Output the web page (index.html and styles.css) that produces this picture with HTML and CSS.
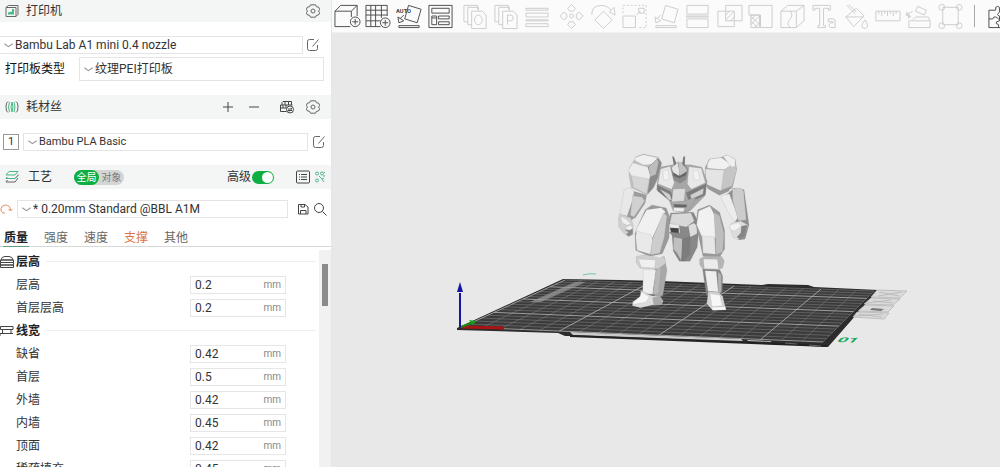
FILE: index.html
```html
<!DOCTYPE html>
<html lang="zh-CN">
<head>
    <meta charset="UTF-8">
    <meta name="viewport" content="width=device-width, initial-scale=1.0">
    <title>Bambu Studio</title>
    <link rel="stylesheet" href="styles.css">
</head>
<body>
    <!-- Shared icons -->
    <svg class="icon-defs" aria-hidden="true">
        <symbol id="i-gear" viewBox="0 0 14 14">
            <path d="M4.500 .8h5l1 2 2 .2 1.200 2.300L12.500 7l1.200 1.700-1.200 2.300-2 .2-1 2h-5l-1-2-2-.2L.3 8.700 1.500 7 .3 5.300 1.500 3l2-.2z"/>
            <circle cx="7" cy="7" r="2"/>
        </symbol>
        <symbol id="i-edit" viewBox="0 0 14 14">
            <path d="M8 1.500H3.500Q1.500 1.500 1.500 3.500v7q0 2 2 2h6q2 0 2-2V7M6.500 8.500l6-7"/>
        </symbol>
        <symbol id="i-down" viewBox="0 0 8 8">
            <path d="M.3 2.500 4 5 7.700 2.500"/>
        </symbol>
    </svg>

    <div class="app">
        <aside class="sidebar">
            <div class="section-head">
                <svg class="icon" viewBox="0 0 14 14"><path d="M1 3.500 3.500 1.500h9.500v9L11 12.500H1zM11 12.500v-9"/><path class="green" d="M3 10.500V8.500l4-1V5h2v5.500z"/><path d="M1 3.500h10"/></svg>
                <h2>打印机</h2>
                <button class="icon-button" aria-label="打印机设置"><svg class="icon"><use href="#i-gear"/></svg></button>
            </div>

            <div class="printer">
                <div class="row printer-row">
                    <div class="select-box">
                        <svg class="chevron"><use href="#i-down"/></svg>
                        <select aria-label="打印机"><option>Bambu Lab A1 mini 0.4 nozzle</option></select>
                    </div>
                    <button class="icon-button" aria-label="编辑打印机"><svg class="icon"><use href="#i-edit"/></svg></button>
                </div>
                <div class="row plate-row">
                    <label for="plate">打印板类型</label>
                    <div class="select-box tall">
                        <svg class="chevron"><use href="#i-down"/></svg>
                        <select id="plate"><option>纹理PEI打印板</option></select>
                    </div>
                </div>
            </div>

            <div class="section-head">
                <svg class="icon" viewBox="0 0 14 14"><path d="M3 1.500Q1 2 1 7t2 5.500M11 1.500Q13 2 13 7t-2 5.500"/><path class="green-line" d="M4.500 2q-2 5 0 10M7 2q-2 5 0 10M9 2q2 5 0 10M7 2q2 5 0 10"/></svg>
                <h2>耗材丝</h2>
                <button class="icon-button" aria-label="添加"><svg class="icon dark" viewBox="0 0 14 14"><path d="M7 2v10M2 7h10"/></svg></button>
                <button class="icon-button" aria-label="删除"><svg class="icon dark" viewBox="0 0 14 14"><path d="M2 7h10"/></svg></button>
                <button class="icon-button ams" aria-label="同步"><svg class="icon dark" viewBox="0 0 14 14"><path d="M2 5V2.500L3 1.500h8.500V5M5 1.500V5M8.500 1.500V5M.5 5h12M.5 5v6.500h6M3 5v3M6 5v3M.5 8h6"/><circle cx="10" cy="9.500" r="3.500"/><path d="M8 9h4l-1-1M12 10.500H8l1 1"/></svg></button>
                <button class="icon-button" aria-label="耗材设置"><svg class="icon"><use href="#i-gear"/></svg></button>
            </div>

            <div class="row filament-row">
                <button class="slot">1</button>
                <div class="select-box">
                    <svg class="chevron"><use href="#i-down"/></svg>
                    <select aria-label="耗材"><option>Bambu PLA Basic</option></select>
                </div>
                <button class="icon-button" aria-label="编辑耗材"><svg class="icon"><use href="#i-edit"/></svg></button>
            </div>

            <div class="section-head process-head">
                <svg class="icon" viewBox="0 0 14 14"><path d="M1 8.500 2.500 7M13 4.500v1l-3 3H1M13 8l-3 4H1l1.500-2"/><path class="green-line" d="M1 5 4 1.500h9L10 5zM13 5l-3 3.500H1"/></svg>
                <h2>工艺</h2>
                <div class="scope">
                    <button class="active">全局</button>
                    <button>对象</button>
                </div>
                <label class="advanced">高级<input type="checkbox" class="toggle" checked></label>
                <button class="icon-button" aria-label="参数列表"><svg class="icon dark" viewBox="0 0 14 14"><rect x=".5" y="1" width="13" height="12" rx="1"/><path d="M5 4.500h6M5 7h6M5 9.500h6M3 4.500h1M3 7h1M3 9.500h1"/></svg></button>
                <button class="icon-button compare" aria-label="比较"><svg class="icon" viewBox="0 0 12 14"><g class="green-line"><circle cx="3" cy="3.500" r="1.500"/><circle cx="8" cy="3.500" r="1.500"/><circle cx="3" cy="10.500" r="1.500"/><path d="m5 6 3 3 2 3M8 9l2-1M10 3l1-1M9 6h2"/></g></svg></button>
            </div>

            <div class="row preset-row">
                <button class="icon-button" aria-label="重置"><svg class="icon" viewBox="0 0 14 14"><path class="orange-line" d="M3 11Q.5 9.500 1 6.500T5.500 3Q10 3 10.500 8M8.500 7l2 2 2-2M5 11H3"/></svg></button>
                <div class="select-box">
                    <svg class="chevron"><use href="#i-down"/></svg>
                    <select aria-label="工艺预设"><option>* 0.20mm Standard @BBL A1M</option></select>
                </div>
                <button class="icon-button" aria-label="保存"><svg class="icon dark" viewBox="0 0 14 14"><path d="M2.500 2.500H9L12 5v7H2.500zM5 2.500V5h3.500V2.500M4.500 12V8.500H10V12"/></svg></button>
                <button class="icon-button" aria-label="搜索"><svg class="icon dark" viewBox="0 0 14 14"><circle cx="6" cy="6" r="4.500"/><path d="m9.500 9.500 4 4"/></svg></button>
            </div>

            <nav class="tabs">
                <button class="active">质量</button>
                <button>强度</button>
                <button>速度</button>
                <button class="changed">支撑</button>
                <button>其他</button>
            </nav>

            <div class="settings">
                <div class="settings-list">
                    <div class="group-head">
                        <svg class="icon dark" viewBox="0 0 14 14"><path d="M1 5Q1.500 1.500 5 1.500h4q3.500 0 4 3.500zM.5 5h13v2.500H.5zM.5 7.500h13V10H.5zM.5 10h13v2.500H.5z"/></svg>
                        <h3>层高</h3>
                    </div>
                    <div class="field">
                        <label for="layer">层高</label>
                        <div class="value"><input id="layer" type="text" value="0.2"><span>mm</span></div>
                    </div>
                    <div class="field">
                        <label for="first-layer">首层层高</label>
                        <div class="value"><input id="first-layer" type="text" value="0.2"><span>mm</span></div>
                    </div>
                    <div class="group-head">
                        <svg class="icon dark" viewBox="0 0 14 14"><path d="M.5 2.500h12.500v3H.5zM2.500 5.500v4M11 5.500v4M0 9.500h13M0 12V9.500"/></svg>
                        <h3>线宽</h3>
                    </div>
                    <div class="field">
                        <label for="w-default">缺省</label>
                        <div class="value"><input id="w-default" type="text" value="0.42"><span>mm</span></div>
                    </div>
                    <div class="field">
                        <label for="w-first">首层</label>
                        <div class="value"><input id="w-first" type="text" value="0.5"><span>mm</span></div>
                    </div>
                    <div class="field">
                        <label for="w-outer">外墙</label>
                        <div class="value"><input id="w-outer" type="text" value="0.42"><span>mm</span></div>
                    </div>
                    <div class="field">
                        <label for="w-inner">内墙</label>
                        <div class="value"><input id="w-inner" type="text" value="0.45"><span>mm</span></div>
                    </div>
                    <div class="field">
                        <label for="w-top">顶面</label>
                        <div class="value"><input id="w-top" type="text" value="0.42"><span>mm</span></div>
                    </div>
                    <div class="field">
                        <label for="w-infill">稀疏填充</label>
                        <div class="value"><input id="w-infill" type="text" value="0.45"><span>mm</span></div>
                    </div>
                </div>
                <div class="scrollbar"><div class="thumb"></div></div>
            </div>
        </aside>

        <main class="workspace">
            <div class="toolbar">
                <div class="tools">
                    <button aria-label="添加模型"><svg viewBox="0 0 28 28"><path d="M17 25H1V9h17v6M1 9l6-6h17v11M18 9l6-6"/><circle cx="22" cy="20" r="5"/><path d="M22 17v6M19 20h6"/></svg></button>
                    <button aria-label="添加盘"><svg viewBox="0 0 28 28"><path d="M16 25H1V3h22v11M1 8h22M1 13h22M1 19h15M6 3v22M11 3v22M17 3v13"/><circle cx="21" cy="21" r="5"/><path d="M21 18v6M18 21h6"/></svg></button>
                    <button aria-label="自动朝向"><svg viewBox="0 0 28 28"><path d="m13 3 13 4-4 14-13-4zM3 24h21v2H3zM8 13l-4 4M2 15l1 6 5-2z"/><text x="0" y="11">AUTO</text></svg></button>
                    <button aria-label="全部整理"><svg viewBox="0 0 28 28"><path d="M2 3h24v23H2zM5 6h18v5H5zM5 14h5v9H5zM12 14h11v3H12zM12 20h11v3H12zM5 16h5"/></svg></button>
                </div>
                <div class="tools disabled">
                    <button aria-label="拆分为对象"><svg viewBox="0 0 28 28"><path d="M6 20H2V3h14v4M10 23H6V5h11v4M10 9h11l4 4v14H10z"/><ellipse cx="17" cy="18" rx="4" ry="5"/></svg></button>
                    <button aria-label="拆分为零件"><svg viewBox="0 0 28 28"><path d="M6 20H2V3h14v4M10 23H6V5h11v4M10 9h11l4 4v14H10zM15 23V13h3q3 0 3 3t-3 3h-3"/></svg></button>
                    <button aria-label="可变层高"><svg viewBox="0 0 28 28"><path d="M2 6h23v2H2zM2 11h23v4H2zM2 18h23v1H2zM2 22h23v3H2z"/></svg></button>
                </div>
                <div class="tools disabled edit-tools">
                    <button aria-label="移动"><svg viewBox="0 0 28 28"><path d="m14 2-4 4 2 3h4l2-3zM14 27l-4-4 2-3h4l2 3zM2 14l4-4 3 2v4l-3 2zM26 14l-4-4-3 2v4l3 2z"/><circle cx="14" cy="14" r="2"/></svg></button>
                    <button aria-label="旋转"><svg viewBox="0 0 28 28"><path d="m14 9 9 9-9 9-9-9zM2 13Q1 4 11 3q7 0 11 5M20 10l5-5 1 8z"/></svg></button>
                    <button aria-label="缩放"><svg viewBox="0 0 28 28"><path d="M2 14h13v12H2zM16 13l4-4M18 6h6v5h-5z"/><path class="dash" d="M2 11V3h24v23h-9"/></svg></button>
                    <button aria-label="选择底面"><svg viewBox="0 0 28 28"><path d="m13 3 13 4-4 14-13-4zM3 24h21v2H3zM8 13l-4 4M2 15l1 6 5-2z"/></svg></button>
                    <button aria-label="切割"><svg viewBox="0 0 28 28"><path d="M3 3h22v9H3zM3 17h22v9H3zM2 14h24M2 15h24"/></svg></button>
                    <button aria-label="布尔运算"><svg viewBox="0 0 28 28"><path d="M2 9h17v16H2zM10 3h17v16H10zM10 13l4-4M10 18l9-9M15 19l4-4"/></svg></button>
                    <button aria-label="支撑绘制"><svg viewBox="0 0 28 28"><path d="M2 3h24v23H14V13H2zM4 13h9v13H4zM4 18l5-5M4 23l9-9M8 26l5-5M4 14l9 9M4 19l7 7"/></svg></button>
                    <button aria-label="涂缝"><svg viewBox="0 0 28 28"><path d="M2 9h16v17H2zM2 9l7-6h17v16l-8 7M18 9l8-6M12 26q-5-4-1-8t1-9"/></svg></button>
                    <button aria-label="文字"><svg viewBox="0 0 28 28"><path d="M2 3h18v5h-2V6h-5v18h2v2H7v-2h2V6H4v2H2zM18 17h5q2 0 2 2v7h-5q-3-3 1-5h2v-1h-5z"/></svg></button>
                    <button aria-label="颜色绘制"><svg viewBox="0 0 28 28"><path d="m4 15 11-9 8 8-11 11zM5 3l9 9M4 15h18M7 2l8 8M24 18q-7 8 0 9 5-1 0-9z"/></svg></button>
                    <button aria-label="测量"><svg viewBox="0 0 28 28"><path d="M2 9h25v10H2zM5 9v3M8 9v5M11 9v3M14 9v5M17 9v3M20 9v5M23 9v3"/></svg></button>
                    <button aria-label="装配"><svg viewBox="0 0 28 28"><path d="M4 19h22v7H4zM8 18l3-3h13l2 4M13 4l9 4-2 5-9-4zM8 9l-5 3 1 5M2 10l4 5-5-2z"/></svg></button>
                    <button aria-label="组装"><svg viewBox="0 0 28 28"><path d="M6 5h16v18H6z"/><circle cx="5" cy="5" r="3"/><circle cx="23" cy="5" r="3"/><circle cx="5" cy="24" r="3"/><circle cx="23" cy="24" r="3"/></svg></button>
                </div>
                <div class="divider"></div>
                <div class="tools last">
                    <button aria-label="装配视图"><svg viewBox="0 0 28 28"><path d="M2 8h7q-1-4 2-4t2 4h12v18H2zM2 17h4q1-3 3-2t3 2h3M12 26v-3q-4-1-2-3l3-1v-5q-4-1 0-4V8"/></svg></button>
                </div>
            </div>

            <svg class="scene" viewBox="332 33 668 434" role="img" aria-label="3D 视图">
                <!-- build plate -->
                <path fill="#2c2c2c" d="M457 328 563 279 620 280 660 281 762 285 768 284 808 285 814 287 878 290 828 347 775 344 574 336 565 336 558 333 457 330z"/>
                <path fill="#3b3b3b" d="M462 327 565 280 874 291 823 342z"/>
                <path class="grid" id="grid"/>
                <path class="grid strong" id="gridStrong"/>
                <path fill="#999" d="m575 282 11 0-45 20-11 0z" opacity=".7"/>
                <path fill="#c9cac9" d="m570 332 171 7 2 2-170-6zM747 340l23 1 2 1-24-1z"/>
                <path stroke="#222" stroke-width="2" d="m570 336 257 10"/>
                <path stroke="#666" d="m785 343 12 1M809 345l12 1"/>
                <path stroke="#6cc7a0" fill="none" d="M583 275q6-2 13-1"/>
                <!-- plate buttons -->
                <g fill="#dadada" stroke="#b0b0b0" stroke-width=".7">
                    <path d="m877 290 30 1-7 7-29-1zM871 298l29 1-7 6-29-1zM865 305l29 1-6 6-30-1zM857 312l32 1-5 6-31-2z"/>
                    <path fill="none" d="m879 292 20 4M902 292l-24 4M873 301l20 2M866 303l25-3M858 314l24 3M855 316l28-2"/>
                </g>
                <path fill="#777" d="m872 308 12 1-3 2-11-1z"/>
                <text class="plate-number" transform="matrix(1.6 .05 -.6 .6 836 342)">01</text>
                <!-- axes -->
                <path stroke="#a81414" stroke-width="3" d="m462 327 42 1"/>
                <path stroke="#168c16" stroke-width="2" d="m461 327 13-5"/>
                <path fill="#17a317" d="m469 320 7 1-3 4z"/>
                <path stroke="#1515a3" stroke-width="2" d="M460 327V293"/>
                <path fill="#1515a3" d="m460 282 3 10h-6z"/>

                <!-- robot model -->
                <g class="robot" transform="translate(610 145) scale(.3333)">
                    <!-- arms -->
                    <path fill="#9c9c9c" d="m60 136 50 14-5 25-28 42-13 8-32-12 10-52z"/>
                    <path fill="#e8e8e8" d="m42 134 18-6 12 12-4 26-17 48-22-6 9-48z"/>
                    <path fill="#d0d0d0" d="m68 152 28 4 8 12-32 48-11-5z"/>
                    <path fill="#d0d0d0" d="m28 206 34 12 8 22-2 28-12 7-13-8-16-20-2-24z"/>
                    <path fill="#f0f0f0" d="m31 213 17 9 15 14-12 5-14-8zM45 248l16-8 8 10-10 8z"/>
                    <path fill="#8b8b8b" d="m45 254 13 2 10-5v17l-12 6-7-6 7-6z"/>
                    <path fill="#8f8f8f" d="m372 130 30 4 15 106-12 42-18 3-14-18 10-24-26-50-14-38z"/>
                    <path fill="#ececec" d="m331 154 27-8 27 70-10 15-24-36z"/>
                    <path fill="#ccc" d="m367 131 26-2 8 10 8 86-24 2-17-62z"/>
                    <path fill="#dcdcdc" d="m364 234 28-6 22 12-10 30-20 14-15-7-9-30z"/>
                    <path fill="#f2f2f2" d="m360 240 26-8 8 12-20 14-14-4z"/>
                    <path fill="#858585" d="m394 244 18-4-8 32-16 9-7-5 12-13z"/>
                    <!-- shoulders -->
                    <path fill="#c0c0c0" d="m58 70 20-35 22-8 45 10 10 16-7 36-16 38-20 23-48-22-7-38z"/>
                    <path fill="#f0f0f0" d="m78 37 22-8 43 9-12 20-31 2-28-15z"/>
                    <path fill="#ececec" d="m68 53 46 14 7 23-11 54-39-18-7-34-9-16z"/>
                    <path fill="#8a8a8a" d="m114 67 30-27 10 14-7 35-18 40-16 17 8-56z"/>
                    <path fill="#bdbdbd" d="m116 66 26-24 4 10-8 36-17 8z"/>
                    <path fill="#d6d6d6" d="m65 92 52 10-8 45-39-20z"/>
                    <path fill="#ababab" d="m285 68 13-26 33-4 19-8 25 12 5 30-13 58-31 10-48-22z"/>
                    <path fill="#f0f0f0" d="m292 57 8-15 34-4 32 22-22 14-52-4z"/>
                    <path fill="#e4e4e4" d="m286 72 56 3 10 33-20 30-44-20z"/>
                    <path fill="#c6c6c6" d="m342 75 24-17-20-24 27 9 7 32-14 47-32 14z"/>
                    <path fill="#eee" d="m339 34 14-4 22 13 1 20-11 4z"/>
                    <path fill="#999" d="m288 118 44 20 30-11-6 12-28 12-34-20z"/>
                    <!-- torso -->
                    <path fill="#a6a6a6" d="m150 66 38-7h54l34 8 16 43-7 42-44 45-14 8-38-8-12-32-37-30 4-46z"/>
                    <path fill="#e8e8e8" d="m152 72 28-8 13 49-8 20-41-17zM237 65l37 5 12 43-42 20-12-16z"/>
                    <path fill="#f1f1f1" d="m158 78 16-3 4 26-16 6zM248 78l17-2 5 27-16 4z"/>
                    <path fill="#7c7c7c" d="m141 120 42 20 8 28-14-2-34-28zM289 116l-3 34-48 22-10-29z"/>
                    <path fill="#d0d0d0" d="m149 132 30 16 7 18-10-2zM281 130l-2 17-35 16-3-13z"/>
                    <path fill="#dcdcdc" d="m190 132 36-1-4 38-37 3z"/>
                    <path fill="#aaa" d="m183 170 42-2 34-12-22 38-42 3z"/>
                    <path fill="#eee" d="m190 188 34 2-4 10-28-2z"/>
                    <path fill="#666" d="m191 178 40 1-2 8-36-1z"/>
                    <!-- head -->
                    <path fill="#8a8a8a" d="m184 72 13-19 24 1 13 20-7 30-17 11-19-11z"/>
                    <path fill="#e4e4e4" d="m194 57 8-5 8 28-3 14-18-13-4-12z"/>
                    <path fill="#c2c2c2" d="m204 50 15 3 13 24-22 17z"/>
                    <path fill="#666" d="m188 83 20 10 22-12-3 10-19 9-17-7z"/>
                    <path fill="#777" d="m187 34 5 2 7 20-7 6zM225 34l-5 2-3 21 7 8z"/>
                    <!-- waist -->
                    <path fill="#888" d="m182 204 68-2 17 32-5 72-22 43h-32l-18-30-4-48-18-18 8-24z"/>
                    <path fill="#d8d8d8" d="m185 207 58-3 10 24-24 18-50-10z"/>
                    <path fill="#eaeaea" d="m177 236 30 3 3 24-34-2z"/>
                    <path fill="#444" d="m180 248 26 2v14l-23-2z"/>
                    <path fill="#c0c0c0" d="m191 277 26 4 2 26-5 40-14-24-10-11z"/>
                    <path fill="#7c7c7c" d="m217 281 24-7-2 54-18 21-7-2z"/>
                    <path fill="#ddd" d="m235 242 16-8 10 8v24l-20 10z"/>
                    <!-- thighs -->
                    <path fill="#9a9a9a" d="m106 194 20-14 43 9 10 26-2 64-20 47-38 8-42-18-2-50 17-42z"/>
                    <path fill="#f0f0f0" d="m110 194 44-6 12 12-12 22-28 60-44-12-4-14 17-35z"/>
                    <path fill="#cdcdcd" d="m160 204 11 8-8 65-14 48-28 4 7-48z"/>
                    <path fill="#e9e9e9" d="m80 258 42 12 6 15-7 43-40-12-4-40z"/>
                    <path fill="#9a9a9a" d="m263 194 36-14 30 22 15 54v56l-15 24-50-2-11-50-10-44z"/>
                    <path fill="#f1f1f1" d="m266 198 34-15 14 28 4 68-40 2-18-42z"/>
                    <path fill="#bebebe" d="m312 202 17 10 13 54-4 54-19 9z"/>
                    <path fill="#e6e6e6" d="m276 272 38 4 3 52-38-4z"/>
                    <!-- lower legs -->
                    <path fill="#a8a8a8" d="m134 352 28-18 9 40-12 76-26 14z"/>
                    <path fill="#cfcfcf" d="m79 334 26-5 44 10 14-4 4 20-22 17-55-2-12-18z"/>
                    <path fill="#f0f0f0" d="m85 342 52 3-3 24-40-2z"/>
                    <path fill="#eee" d="m100 373 38 2-10 74-30-4z"/>
                    <path fill="#b8b8b8" d="m138 375 16-8-8 77-18 6z"/>
                    <path fill="#777" d="m98 444 32 5-4 9-34-5z"/>
                    <path fill="#ddd" d="m92 436 32 16 26 2 10 14-6 12-29 1-34 7-24-6 1-10 24-20z"/>
                    <path fill="#f7f7f7" d="m94 440 24 16-11 16-36 6-3-6 22-16z"/>
                    <path fill="#aaa" d="m128 458 21-5 10 14-5 13-22 1z"/>
                    <path fill="#b5b5b5" d="m269 342 15-8h50l9 14-5 20-16 8-43-2-10-16z"/>
                    <path fill="#ececec" d="m280 342 42 1 4 29-43-1z"/>
                    <path fill="#858585" d="m278 373 52 2 8 18-1 46-14 20-34-8z"/>
                    <path fill="#eee" d="m285 377 34 2 6 62-31-2z"/>
                    <path fill="#b5b5b5" d="m324 380 10 10v48l-9 12z"/>
                    <path fill="#d4d4d4" d="m295 440 30 2 13 12 10 40-40 2-18-20z"/>
                    <path fill="#f7f7f7" d="m300 446 29 4 8 32-31 3zM304 487l42-2 2 10-40 1z"/>
                </g>
            </svg>
        </main>
    </div>

    <script>
        // Perspective grid on the build plate, 18 x 18 cells
        const cells = 18;
        const corners = [[462, 327], [823, 342], [874, 291], [565, 280]];

        function project(u, v) {
            const [a, b, c, d] = corners;
            const dx1 = b[0] - c[0], dx2 = d[0] - c[0], dx3 = a[0] - b[0] + c[0] - d[0];
            const dy1 = b[1] - c[1], dy2 = d[1] - c[1], dy3 = a[1] - b[1] + c[1] - d[1];
            const det = dx1 * dy2 - dx2 * dy1;
            const g = (dx3 * dy2 - dx2 * dy3) / det;
            const h = (dx1 * dy3 - dx3 * dy1) / det;
            const w = g * u + h * v + 1;
            const x = ((b[0] - a[0] + g * b[0]) * u + (d[0] - a[0] + h * d[0]) * v + a[0]) / w;
            const y = ((b[1] - a[1] + g * b[1]) * u + (d[1] - a[1] + h * d[1]) * v + a[1]) / w;
            return x.toFixed(1) + ' ' + y.toFixed(1);
        }

        let thin = '';
        let strong = '';
        for (let i = 0; i <= cells; i++) {
            const t = i / cells;
            const line = `M${project(t, 0)}L${project(t, 1)}M${project(0, t)}L${project(1, t)}`;
            if (i % 5 === 0) {
                strong += line;
            } else {
                thin += line;
            }
        }
        document.querySelector('#grid').setAttribute('d', thin);
        document.querySelector('#gridStrong').setAttribute('d', strong);
    </script>
</body>
</html>
```

FILE: styles.css
```css
* {
    box-sizing: border-box;
}

body {
    margin: 0;
    font-family: Roboto, "Noto Sans CJK SC", sans-serif;
    font-size: 12px;
    line-height: 16px;
    color: #333;
    background-color: #fff;
}

button,
input,
select {
    font: inherit;
    color: inherit;
    margin: 0;
    padding: 0;
    border: 0;
    background: none;
}

h2,
h3 {
    margin: 0;
    font-size: 12px;
}

.icon-defs {
    position: absolute;
    width: 0;
    height: 0;
}

.app {
    display: flex;
    height: 100vh;
    overflow: hidden;
}

/* Sidebar */
.sidebar {
    display: flex;
    flex-direction: column;
    width: 33.2%;
    border-right: 1px solid #e6e6e6;
    background-color: #fff;
}

.icon {
    display: block;
    flex: none;
    width: 14px;
    height: 14px;
    fill: none;
    stroke: #666;
}

.icon.dark {
    stroke: #444;
}

.icon .green {
    fill: #4bb987;
    stroke: none;
}

.green-line {
    stroke: #4bb987;
}

.orange-line {
    stroke: #e08a68;
}

.icon-button {
    flex: none;
}

.section-head {
    display: flex;
    flex: none;
    align-items: center;
    gap: 12px;
    height: 24px;
    padding: 0 11px 0 5px;
    background-color: #f4f5f5;
}

.section-head:first-child {
    height: 22px;
}

.section-head h2 {
    flex: 1;
    margin-left: -5px;
    font-weight: 400;
}

.section-head .ams {
    margin-left: 7px;
}

.row {
    display: flex;
    flex: none;
    align-items: center;
}

.printer {
    padding: 14px 0;
}

.select-box {
    display: flex;
    flex: 1;
    align-items: center;
    gap: 2px;
    height: 18px;
    padding-left: 4px;
    border: 1px solid #e4e4e4;
}

.select-box.tall {
    height: 24px;
}

.select-box select {
    flex: 1;
    min-width: 0;
    appearance: none;
    outline: none;
}

.chevron {
    flex: none;
    width: 9px;
    height: 9px;
    fill: none;
    stroke: #999;
}

.printer-row {
    gap: 3px;
    padding-right: 11px;
}

.printer-row .select-box {
    border-left: 0;
}

.plate-row {
    gap: 14px;
    margin-top: 3px;
    padding: 0 7px 0 5px;
}

.plate-row label {
    color: #111;
}

.filament-row {
    gap: 4px;
    padding: 14px 5px 14px 3px;
}

.filament-row select {
    font-size: 11px;
}

.slot {
    width: 16px;
    height: 16px;
    border: 1px solid #999;
    font-size: 11px;
    line-height: 14px;
}

.process-head {
    gap: 4px;
    padding-right: 5px;
}

.process-head h2 {
    flex: none;
    margin-left: 5px;
}

.scope {
    display: flex;
    margin-left: 18px;
    border-radius: 8px;
    background-color: #d4d5d5;
    color: #777;
}

.scope button {
    width: 25px;
    height: 15px;
    border-radius: 8px;
    font-size: 10px;
    line-height: 15px;
}

.scope .active {
    background-color: #0eae42;
    color: #fff;
}

.advanced {
    display: flex;
    align-items: center;
    gap: 1px;
    margin: 0 18px 0 auto;
}

.toggle {
    appearance: none;
    width: 22px;
    height: 13px;
    padding: 1px;
    border-radius: 7px;
    background-color: #bbb;
}

.toggle::before {
    content: "";
    display: block;
    width: 11px;
    height: 11px;
    border-radius: 50%;
    background-color: #fff;
}

.toggle:checked {
    background-color: #0eae42;
}

.toggle:checked::before {
    margin-left: auto;
}

.compare .icon {
    width: 12px;
}

.preset-row {
    gap: 3px;
    padding: 11px 4px 12px 0;
}

.preset-row .select-box {
    margin-right: 5px;
}

/* Tabs */
.tabs {
    display: flex;
    flex: none;
    gap: 14px;
    padding-left: 3px;
    border-bottom: 1px solid #d5dad8;
    color: #666;
}

.tabs button {
    height: 16px;
    padding: 0 1px;
}

.tabs .active {
    box-shadow: 0 1px #5f9f84;
    color: #222;
    font-weight: 700;
}

.tabs .changed {
    color: #dd7442;
}

/* Settings */
.settings {
    display: flex;
    flex: 1;
    min-height: 0;
    padding-top: 3px;
    overflow: hidden;
}

.settings-list {
    flex: 1;
    overflow: hidden;
}

.group-head {
    display: flex;
    align-items: center;
    gap: 2px;
    height: 23px;
    padding-right: 3px;
}

.group-head::after {
    content: "";
    flex: 1;
    margin-left: 4px;
    border-top: 1px solid #eee;
}

.group-head h3 {
    color: #222;
}

.field {
    display: flex;
    align-items: center;
    justify-content: space-between;
    height: 23px;
    padding: 0 33px 0 16px;
}

.value {
    display: flex;
    align-items: center;
    width: 96px;
    height: 18px;
    padding: 0 4px;
    border: 1px solid #e6e6e6;
}

.value input {
    flex: 1;
    min-width: 0;
    outline: none;
}

.value span {
    color: #888;
    font-size: 10px;
}

.scrollbar {
    width: 12px;
    padding: 14px 3px;
    background-color: #f1f1f1;
}

.thumb {
    height: 42px;
    background-color: #8a8a8a;
}

/* Workspace */
.workspace {
    display: flex;
    flex: 1;
    flex-direction: column;
    min-width: 0;
    background-color: #e8e8e8;
}

.toolbar {
    display: flex;
    flex: none;
    align-items: center;
    height: 33px;
    padding-left: 2px;
    border-bottom: 1px solid #f0f0f0;
    background-color: #fbfbfb;
    overflow: hidden;
}

.tools {
    display: flex;
    flex: none;
    gap: 4px;
    margin-right: 8px;
}

.tools button {
    width: 27px;
    height: 28px;
}

.tools svg {
    display: block;
    width: 27px;
    height: 28px;
    fill: none;
    stroke: #4c4c4c;
}

.tools text {
    fill: #444;
    stroke: none;
    font-size: 6px;
    font-weight: 700;
}

.tools.disabled svg {
    stroke: #ccc;
}

.tools .dash {
    stroke-dasharray: 2 2;
}

.tools.edit-tools {
    flex: 1;
    justify-content: space-between;
    gap: 0;
    margin-left: -1px;
}

.divider {
    width: 1px;
    height: 22px;
    margin: 0 12px 0 2px;
    background-color: #aaa;
}

.tools.last {
    margin-right: 0;
}

.tools.last button {
    width: 13px;
    overflow: hidden;
}

.scene {
    flex: 1;
    width: 100%;
    min-height: 0;
}

.grid {
    fill: none;
    stroke: #858585;
    stroke-width: .5;
}

.grid.strong {
    stroke: #b5b5b5;
    stroke-width: .8;
}

.plate-number {
    fill: #16a860;
    font-size: 11px;
    font-weight: 700;
}

.robot {
    stroke: #777;
    stroke-opacity: .4;
    stroke-linejoin: round;
}
```
